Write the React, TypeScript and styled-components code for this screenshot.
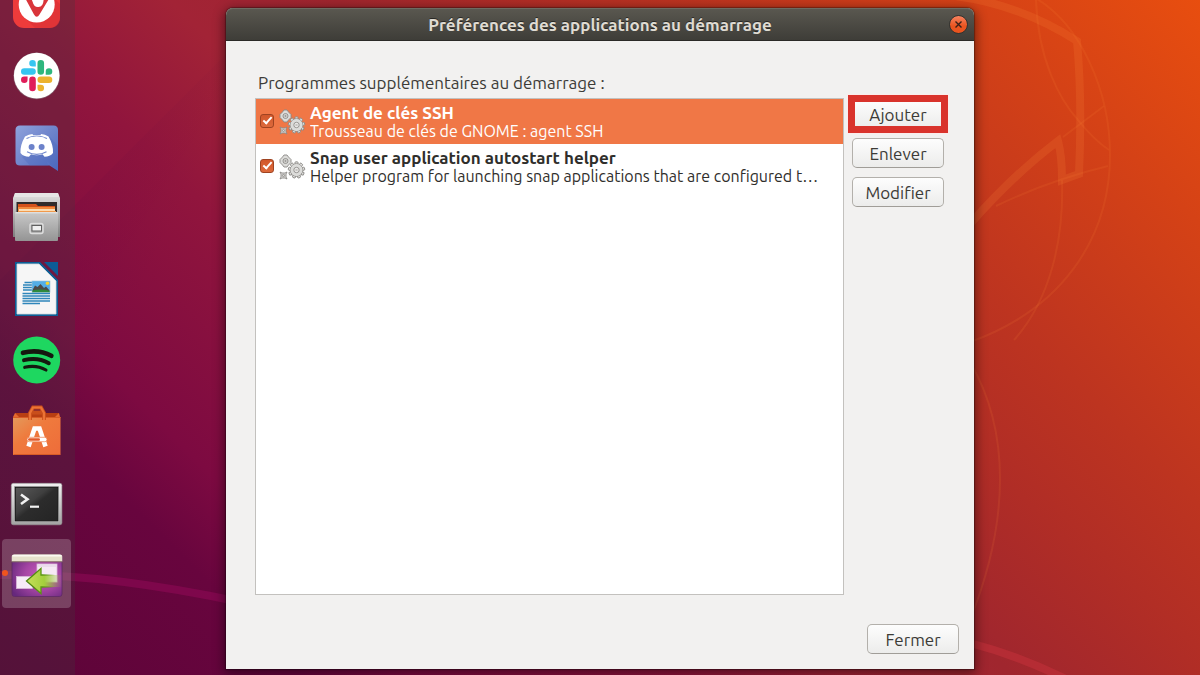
import React, { useState } from "react";
import styled, { createGlobalStyle, css } from "styled-components";

const GlobalStyle = createGlobalStyle`
  *, *::before, *::after { box-sizing: border-box; }
  body {
    margin: 0;
    font-family: Ubuntu, "Noto Sans", sans-serif;
    font-size: 17px;
    line-height: 19px;
    color: #3c3b37;
  }
`;

const Desktop = styled.div`
  position: relative;
  display: flex;
  min-height: 100vh;
  overflow: hidden;
  background: linear-gradient(
    45deg,
    #5c0438 0%,
    #68053e 16%,
    #7d0a41 22%,
    #91153d 36%,
    #a22336 45%,
    #a0262e 54%,
    #b02d26 64%,
    #bd3420 73%,
    #d54216 88%,
    #e84e0f 100%
  );
`;

const Wallpaper = styled.svg`
  position: absolute;
  inset: 0;
  width: 100%;
  height: 100%;
`;

const Dock = styled.nav`
  position: relative;
  flex: none;
  width: 75px;
  height: 100vh;
  background: rgba(64, 56, 60, 0.28);
`;

const DockList = styled.ul`
  display: flex;
  flex-direction: column;
  gap: 2px;
  margin: -29px 0 0;
  padding: 0 2px;
  list-style: none;
`;

const DockButton = styled.button<{ $running?: boolean }>`
  position: relative;
  display: block;
  width: 69px;
  height: 69px;
  padding: 0;
  border: 0;
  border-radius: 4px;
  background: ${(p) => (p.$running ? "rgba(255, 255, 255, 0.2)" : "none")};

  ${(p) =>
    p.$running &&
    css`
      &::before {
        content: "";
        position: absolute;
        left: 0;
        top: 31px;
        width: 6px;
        height: 6px;
        border-radius: 50%;
        background: #f0541e;
      }
    `}

  svg {
    display: block;
    width: 69px;
    height: 69px;
  }
`;

const Workspace = styled.main`
  position: relative;
  flex: 1;
  min-width: 0;
  display: flex;
  padding: 8px 226px 6px 151px;
`;

const Window = styled.section`
  flex: 1;
  min-width: 0;
  display: flex;
  flex-direction: column;
  border-radius: 7px 7px 0 0;
  background: #f2f1f0;
  box-shadow: 0 0 1px 1px rgba(0, 0, 0, 0.3), 0 3px 12px 2px rgba(0, 0, 0, 0.45);
`;

const TitleBar = styled.header`
  display: grid;
  grid-template-columns: 1fr auto 1fr;
  align-items: center;
  height: 33px;
  padding: 0 6px;
  border-radius: 7px 7px 0 0;
  border-bottom: 1px solid #2b2a27;
  background: linear-gradient(#5a5850, #3e3d38);
  box-shadow: inset 0 1px #6d6b62;
`;

const Title = styled.h1`
  grid-column: 2;
  margin: 0;
  font-size: 17px;
  font-weight: 700;
  line-height: 19px;
  color: #dfdbd2;
  text-shadow: 0 -1px rgba(0, 0, 0, 0.5);
`;

const CloseButton = styled.button`
  justify-self: end;
  display: grid;
  place-items: center;
  width: 19px;
  height: 19px;
  padding: 0;
  border: 1px solid #33322e;
  border-radius: 50%;
  background: linear-gradient(#f78360, #e9541f 60%);

  svg {
    width: 7px;
    height: 7px;
  }
`;

const Content = styled.div`
  flex: 1;
  display: flex;
  flex-direction: column;
  padding: 32px 15px 15px 29px;
`;

const Caption = styled.h2`
  margin: 0 0 6px;
  padding-left: 3px;
  font-size: 17px;
  font-weight: 400;
  line-height: 19px;
`;

const Panel = styled.div`
  flex: 1;
  display: flex;
  gap: 8px;
  padding-right: 15px;
`;

const ProgramList = styled.ul`
  flex: 1;
  min-width: 0;
  margin: 0;
  padding: 0;
  list-style: none;
  border: 1px solid #c3c1be;
  background: #fff;
`;

const ProgramRow = styled.li<{ $selected?: boolean }>`
  display: flex;
  align-items: center;
  height: 45px;
  padding: 0 8px 0 4px;
  color: ${(p) => (p.$selected ? "#fff" : "#2f2e2b")};
  background: ${(p) => (p.$selected ? "#f07746" : "none")};
`;

const Tick = styled.input`
  appearance: none;
  position: relative;
  flex: none;
  width: 14px;
  height: 14px;
  margin: 0 4px 2px 0;
  border: 1px solid #9f4321;
  border-radius: 3px;
  background: linear-gradient(#d2572a, #dd6a3c);

  &:checked::after {
    content: "";
    position: absolute;
    left: 4px;
    top: 0;
    width: 5px;
    height: 9px;
    border: solid #fff;
    border-width: 0 2px 2px 0;
    transform: rotate(42deg);
  }
`;

const ProgramLabel = styled.label`
  flex: 1;
  min-width: 0;
  display: flex;
  align-items: center;

  > svg {
    flex: none;
    width: 28px;
    height: 28px;
    margin-right: 4px;
  }
`;

const ProgramText = styled.span`
  flex: 1;
  min-width: 0;
`;

const ProgramName = styled.strong`
  display: block;
  font-weight: 700;
  line-height: 19px;
  white-space: nowrap;
`;

const ProgramComment = styled.span`
  display: block;
  font-size: 16px;
  line-height: 19px;
  white-space: nowrap;
  overflow: hidden;
`;

const Actions = styled.div`
  flex: none;
  display: flex;
  flex-direction: column;
  gap: 9px;
  width: 92px;
  padding-top: 1px;
`;

const PushButton = styled.button<{ $highlighted?: boolean }>`
  position: relative;
  width: 92px;
  height: 30px;
  padding: 0;
  border: 1px solid #b3b0ab;
  border-bottom-color: #a09d98;
  border-radius: 5px;
  background: linear-gradient(#fdfdfd, #ececeb);
  font: inherit;
  color: #3c3b37;

  ${(p) =>
    p.$highlighted &&
    css`
      &::after {
        content: "";
        position: absolute;
        inset: -5px;
        border: 7px solid #d9332c;
        box-shadow: 0 0 0 1px #fbeceb;
      }
    `}
`;

const Footer = styled.footer`
  display: flex;
  justify-content: flex-end;
  padding-top: 29px;
`;

const VivaldiIcon = () => (
  <svg viewBox="0 0 69 69" aria-hidden="true">
    <rect x="11" y="10" width="47" height="47" rx="11" fill="#ee3b3b" />
    <path d="M22 46 33 57H47Q58 57 58 46V33L51 26Z" fill="#d93036" opacity=".6" />
    <circle cx="34.7" cy="33.5" r="18" fill="#fff" />
    <path
      d="M22 25 32 43.500Q34.700 48 37.500 43.500L47.500 27Q49 21 45 20.500 42 21 41.700 27 41.700 36 36.500 36 32 36.500 30.500 30.500L27 22Q22 20 22 25Z"
      fill="#d9353a"
    />
  </svg>
);

const SlackIcon = () => (
  <svg viewBox="0 0 69 69" aria-hidden="true">
    <circle cx="34.7" cy="33.9" r="23.3" fill="#8a8088" opacity=".6" />
    <circle cx="34.7" cy="33.6" r="22.8" fill="#fff" />
    <g transform="translate(19 18) scale(1.304)">
      <path fill="#e01e5a" d="M5.042 15.165a2.528 2.528 0 0 1-2.520 2.523A2.528 2.528 0 0 1 0 15.165a2.527 2.527 0 0 1 2.522-2.520h2.520v2.520zM6.313 15.165a2.527 2.527 0 0 1 2.521-2.520 2.527 2.527 0 0 1 2.521 2.520v6.313A2.528 2.528 0 0 1 8.834 24a2.528 2.528 0 0 1-2.521-2.522v-6.313z" />
      <path fill="#36c5f0" d="M8.834 5.042a2.528 2.528 0 0 1-2.521-2.520A2.528 2.528 0 0 1 8.834 0a2.528 2.528 0 0 1 2.521 2.522v2.520H8.834zM8.834 6.313a2.528 2.528 0 0 1 2.521 2.521 2.528 2.528 0 0 1-2.521 2.521H2.522A2.528 2.528 0 0 1 0 8.834a2.528 2.528 0 0 1 2.522-2.521h6.312z" />
      <path fill="#2eb67d" d="M18.956 8.834a2.528 2.528 0 0 1 2.522-2.521A2.528 2.528 0 0 1 24 8.834a2.528 2.528 0 0 1-2.522 2.521h-2.522V8.834zM17.688 8.834a2.528 2.528 0 0 1-2.523 2.521 2.527 2.527 0 0 1-2.520-2.521V2.522A2.527 2.527 0 0 1 15.165 0a2.528 2.528 0 0 1 2.523 2.522v6.312z" />
      <path fill="#ecb22e" d="M15.165 18.956a2.528 2.528 0 0 1 2.523 2.522A2.528 2.528 0 0 1 15.165 24a2.527 2.527 0 0 1-2.520-2.522v-2.522h2.520zM15.165 17.688a2.527 2.527 0 0 1-2.520-2.523 2.526 2.526 0 0 1 2.520-2.520h6.313A2.527 2.527 0 0 1 24 15.165a2.528 2.528 0 0 1-2.522 2.523h-6.313z" />
    </g>
  </svg>
);

const DiscordIcon = () => (
  <svg viewBox="0 0 69 69" aria-hidden="true">
    <defs>
      <linearGradient id="discord" x1="0" y1="0" x2="1" y2="1">
        <stop offset="0" stopColor="#8fa3dc" />
        <stop offset=".5" stopColor="#6e84cb" />
        <stop offset="1" stopColor="#4a68c0" />
      </linearGradient>
    </defs>
    <path d="M18 12.500H51.500Q56 12.500 56 17V58L47.500 52.500H18Q13.500 52.500 13.500 48V17Q13.500 12.500 18 12.500Z" fill="url(#discord)" />
    <path d="M20 44 28 52.500H46L45 48.500 56 58V33L48 24Z" fill="#4d69bd" opacity=".35" />
    <path
      d="M23 23.500Q27 21 30.500 21L31 22.300Q34.700 21.700 38.500 22.300L39 21Q43 21 46.500 23.500 51.500 32 51 40 48 43.800 42.500 43.800L40.500 41.300Q34.700 43 29 41.300L27 43.800Q21.500 43.800 18.500 40 18 32 23 23.500Z"
      fill="#fff"
    />
    <path d="M24.500 25.500Q34.700 20.500 45 25.500M25 38.700Q34.700 44 44.500 38.700" stroke="#7288cd" strokeWidth="1.100" fill="none" />
    <path d="M27 24.800Q34.700 22.600 42.500 24.800L42 27H27Z" fill="#fff" />
    <circle cx="29.600" cy="34" r="3" fill="#6c82ca" />
    <circle cx="39.600" cy="34" r="3" fill="#6c82ca" />
  </svg>
);

const FilesIcon = () => (
  <svg viewBox="0 0 69 69" aria-hidden="true">
    <defs>
      <linearGradient id="drawer" x1="0" y1="0" x2="0" y2="1">
        <stop offset="0" stopColor="#c9c9c9" />
        <stop offset="1" stopColor="#949494" />
      </linearGradient>
      <linearGradient id="cabinet" x1="0" y1="0" x2="0" y2="1">
        <stop offset="0" stopColor="#e2e2e2" />
        <stop offset="1" stopColor="#7e7e7e" />
      </linearGradient>
    </defs>
    <path d="M13 9H56L58 14V53H11V14Z" fill="url(#cabinet)" />
    <path d="M13 9H56L57 13H12Z" fill="#e6e6e6" />
    <rect x="14.500" y="18" width="40.500" height="11" fill="#302b2b" />
    <path d="M16 20H34L36 22H53V29H16Z" fill="#d4521b" />
    <path d="M16 23H53V29H16Z" fill="#f08a3c" />
    <path d="M17 25H53V29H17Z" fill="#fbdcb4" />
    <path d="M16 27H54V29H16Z" fill="#f19a4c" />
    <rect x="13" y="28" width="43" height="29" rx="1" fill="url(#drawer)" />
    <path d="M13.500 28.800H55.500" stroke="#e9e9e9" />
    <rect x="28" y="39.500" width="13" height="10" rx="2" fill="#aaa" stroke="#dcdcdc" strokeWidth="1.500" />
    <rect x="30" y="41.500" width="9.500" height="5.500" fill="#efefef" stroke="#5f5f5f" strokeWidth="1" />
  </svg>
);

const WriterIcon = () => (
  <svg viewBox="0 0 69 69" aria-hidden="true">
    <path d="M13 7H38L56 25V61H13Z" fill="#0c5f96" />
    <path d="M15 9H37L54 26V59H15Z" fill="#f6f6f6" stroke="#d3dbe0" strokeWidth=".8" />
    <path d="M39 5.500 57.500 24" stroke="#6f1840" strokeWidth="2.200" />
    <path d="M42 7H56V21Z" fill="#0d5c96" />
    <path d="M22.500 27.500H30M21 30H30M21 32.500H30M21 35H30M20.500 38.500H48M20.500 41H48M20.500 43.500H48M20.500 46H48M20.500 48.500H38" stroke="#2f86bb" strokeWidth="1.300" />
    <rect x="30" y="26" width="18" height="11.500" fill="#53aee6" />
    <path d="M30 36 33 30.500 35.500 32 38.500 29 42 33 44 31.500 48 36Z" fill="#4b4b49" />
    <path d="M30 35.500Q40 33.500 48 36V37.500H30Z" fill="#2f8a3c" />
    <circle cx="45.500" cy="28.300" r="1.800" fill="#f6d32d" />
    <rect x="30" y="26" width="18" height="11.500" fill="none" stroke="#9cc3da" strokeWidth=".6" />
  </svg>
);

const SpotifyIcon = () => (
  <svg viewBox="0 0 69 69" aria-hidden="true">
    <circle cx="34.700" cy="34" r="23.500" fill="#1ed760" />
    <g fill="none" stroke="#15190f" strokeLinecap="round">
      <path d="M21 26.800Q36.500 22.800 49.300 29.800" strokeWidth="4.700" />
      <path d="M22 34.200Q35.500 30.700 46.800 37.200" strokeWidth="3.900" />
      <path d="M22.700 41.300Q34.500 38.500 44 44" strokeWidth="3.100" />
    </g>
  </svg>
);

const SoftwareIcon = () => (
  <svg viewBox="0 0 69 69" aria-hidden="true">
    <defs>
      <linearGradient id="bag" x1="0" y1="0" x2="1" y2="1">
        <stop offset="0" stopColor="#e39a5c" />
        <stop offset=".4" stopColor="#ef7a3d" />
        <stop offset="1" stopColor="#ee6c3a" />
      </linearGradient>
    </defs>
    <path d="M13 16H57V21H13Z" fill="#b83e12" />
    <path d="M13 16 17 20H11ZM57 16 53 20H58Z" fill="#e46a30" />
    <rect x="11" y="20" width="47.500" height="38" fill="url(#bag)" />
    <path d="M11.500 57.500H58M11 20.500H58.500" stroke="#d85c26" />
    <path d="M28 23V16L31 10.500H39L42 16V23M28 15.500H42" fill="none" stroke="#c94e1b" strokeWidth="3.800" />
    <path d="M28 23V16L31 10.500H39L42 16V23" fill="none" stroke="#ec7336" strokeWidth="2.200" />
    <path d="M26.500 49.500 32.500 31.500H37.500L43.500 49.500M29 42.500H41" fill="none" stroke="#fff" strokeWidth="4.600" />
    <rect x="25" y="40.300" width="20" height="4.400" rx="2.200" fill="#fff" stroke="#ee7e4b" strokeWidth=".7" />
    <rect x="26" y="41.200" width="12" height="2.600" rx="1.300" fill="#e2592a" />
  </svg>
);

const TerminalIcon = () => (
  <svg viewBox="0 0 69 69" aria-hidden="true">
    <defs>
      <linearGradient id="screen" x1="0" y1="0" x2="1" y2="1">
        <stop offset="0" stopColor="#5a5a5a" />
        <stop offset=".4" stopColor="#3f3f3f" />
        <stop offset=".5" stopColor="#2c2c2c" />
        <stop offset="1" stopColor="#242424" />
      </linearGradient>
      <linearGradient id="frame" x1="0" y1="0" x2="0" y2="1">
        <stop offset="0" stopColor="#f1f1f1" />
        <stop offset="1" stopColor="#a3a3a3" />
      </linearGradient>
    </defs>
    <rect x="9.300" y="15.300" width="50.600" height="41.500" rx="2" fill="url(#frame)" stroke="#999" strokeWidth=".6" />
    <rect x="12" y="18" width="45" height="36" fill="#b8b8b8" />
    <rect x="13.300" y="19.300" width="42.500" height="33.500" fill="url(#screen)" stroke="#151515" />
    <path d="M19 26.500 25.500 31.200 19 36" fill="none" stroke="#f2f2f2" strokeWidth="2.600" />
    <path d="M28 38.700H37" stroke="#f2f2f2" strokeWidth="2.200" />
  </svg>
);

const StartupIcon = () => (
  <svg viewBox="0 0 69 69" aria-hidden="true">
    <defs>
      <radialGradient id="desk" cx=".6" cy=".5" r=".7">
        <stop offset="0" stopColor="#c85cbc" />
        <stop offset=".5" stopColor="#a546a4" />
        <stop offset="1" stopColor="#66287c" />
      </radialGradient>
      <linearGradient id="arrow" x1="0" y1="0" x2="1" y2="0">
        <stop offset="0" stopColor="#c7df5a" />
        <stop offset=".5" stopColor="#a3cf3c" />
        <stop offset="1" stopColor="#8fc02e" stopOpacity="0" />
      </linearGradient>
      <linearGradient id="arrowEdge" x1="0" y1="0" x2="1" y2="0">
        <stop offset="0" stopColor="#4d8410" />
        <stop offset=".45" stopColor="#5c9614" />
        <stop offset=".8" stopColor="#5c9614" stopOpacity="0" />
      </linearGradient>
    </defs>
    <rect x="10" y="15.500" width="50" height="42" rx="2.500" fill="url(#desk)" stroke="#5e2a66" strokeWidth=".8" />
    <path d="M9.700 22.500V18Q9.700 15.200 12.500 15.200H57.500Q60.300 15.200 60.300 18V22.500Z" fill="#e6e2cc" />
    <path d="M10.500 16.800H59.500" stroke="#fbfaf2" strokeWidth="1.500" />
    <path d="M9.700 22.800H60.300" stroke="#7f7558" strokeWidth=".8" />
    <rect x="35" y="25" width="20" height="18" fill="#f6e9f5" stroke="#d9b9d9" strokeWidth=".8" />
    <path d="M36 27H54" stroke="#dfcfe0" strokeWidth="1" />
    <rect x="14.500" y="37.500" width="16" height="12" fill="#f6ecf7" stroke="#d9b9d9" strokeWidth=".8" />
    <path d="M24.500 42 39 29.500V36H60V48H39V54.500Z" fill="url(#arrow)" stroke="url(#arrowEdge)" strokeWidth="1.300" />
  </svg>
);

const teeth = (count: number) => Array.from({ length: count }, (_, i) => (360 / count) * i);

const GearsIcon = () => (
  <svg viewBox="0 0 28 28" aria-hidden="true">
    <g fill="#dcdcda" stroke="#8b8986" strokeWidth=".9">
      <g transform="translate(7.500 8)">
        <path d="M-1.500-6H1.500L3-4 5.500-1.500V1.500L3 4 1.500 6H-1.500L-3 4-5.500 1.500V-1.500L-3-4Z" />
        <circle r="2.500" />
        <circle r=".7" />
      </g>
      <g transform="translate(18.500 17)">
        {teeth(9).map((angle) => (
          <rect key={angle} x="-1.500" y="-8.200" width="3" height="4" rx=".8" transform={`rotate(${angle})`} />
        ))}
        <circle r="6.200" />
        <circle r="6" stroke="none" />
        <circle r="2.700" fill="#f3f2f1" />
        <circle r="1.300" fill="#c7c5c3" stroke="none" />
      </g>
      <g transform="translate(5.500 22.500)">
        <path d="M-3.500-3.500-1.500-2.500H1.500L3.500-3.500 2.500-1.500V1.500L3.500 3.500 1.500 2.500H-1.500L-3.500 3.500-2.500 1.500V-1.500Z" />
        <circle r="1.100" />
      </g>
    </g>
  </svg>
);

const dockItems = [
  { name: "Vivaldi", Icon: VivaldiIcon },
  { name: "Slack", Icon: SlackIcon },
  { name: "Discord", Icon: DiscordIcon },
  { name: "Fichiers", Icon: FilesIcon },
  { name: "LibreOffice Writer", Icon: WriterIcon },
  { name: "Spotify", Icon: SpotifyIcon },
  { name: "Logiciels Ubuntu", Icon: SoftwareIcon },
  { name: "Terminal", Icon: TerminalIcon },
  { name: "Applications au démarrage", Icon: StartupIcon, running: true },
];

const programs = [
  { id: "ssh", name: "Agent de clés SSH", comment: "Trousseau de clés de GNOME : agent SSH" },
  {
    id: "snap",
    name: "Snap user application autostart helper",
    comment: "Helper program for launching snap applications that are configured t…",
  },
];

export default function App() {
  const [selected, setSelected] = useState("ssh");

  return (
    <Desktop>
      <GlobalStyle />
      <Wallpaper viewBox="0 0 1200 675" preserveAspectRatio="xMidYMid slice" aria-hidden="true">
        <defs>
          <linearGradient id="facet" x1="0" y1="0" x2="1" y2="1">
            <stop offset=".2" stopColor="#5c0040" stopOpacity=".16" />
            <stop offset=".5" stopColor="#5c0040" stopOpacity="0" />
          </linearGradient>
        </defs>
        <path d="M-10 290 290-10V590H-10Z" fill="url(#facet)" />
        <g fill="none" stroke="#ff8c3c" strokeOpacity=".16">
          <path
            strokeWidth="8"
            d="M955-4C1000 2 1040 17 1077 41 1081 85 1081 130 1079 174L1062 180C1062 165 1061 152 1058 141 1030 162 1000 190 970 224"
          />
          <g strokeWidth="2" strokeOpacity=".12">
            <path d="M1037-1C1080 25 1110 90 1110 155 1110 240 1060 310 970 342" />
            <path d="M1036 0C1038 60 1060 100 1078 120 1090 135 1100 144 1109 150" />
            <path d="M1104 106 1063 137M1108 166Q1050 180 996 206" />
            <path d="M1062 180C1064 240 1050 300 1014 340" />
            <path d="M970 362C1010 430 1010 520 970 620" />
          </g>
        </g>
        <path d="M970 643Q1020 656 1070 681" fill="none" stroke="#c8323c" strokeOpacity=".5" strokeWidth="8" />
        <path d="M0 575C80 573 160 585 240 602" fill="none" stroke="#960a5a" strokeOpacity=".5" strokeWidth="8" />
      </Wallpaper>

      <Dock aria-label="Dock">
        <DockList>
          {dockItems.map(({ name, Icon, running }) => (
            <li key={name}>
              <DockButton type="button" aria-label={name} $running={running}>
                <Icon />
              </DockButton>
            </li>
          ))}
        </DockList>
      </Dock>

      <Workspace>
        <Window aria-labelledby="window-title">
          <TitleBar>
            <Title id="window-title">Préférences des applications au démarrage</Title>
            <CloseButton type="button" aria-label="Fermer la fenêtre">
              <svg viewBox="0 0 7 7" aria-hidden="true">
                <path d="M.5.500 6.500 6.500M6.500.500.500 6.500" stroke="#3a2018" strokeWidth="1.400" />
              </svg>
            </CloseButton>
          </TitleBar>

          <Content>
            <Caption>Programmes supplémentaires au démarrage :</Caption>
            <Panel>
              <ProgramList>
                {programs.map(({ id, name, comment }) => (
                  <ProgramRow key={id} $selected={id === selected} onClick={() => setSelected(id)}>
                    <Tick type="checkbox" id={id} defaultChecked />
                    <ProgramLabel htmlFor={id}>
                      <GearsIcon />
                      <ProgramText>
                        <ProgramName>{name}</ProgramName>
                        <ProgramComment>{comment}</ProgramComment>
                      </ProgramText>
                    </ProgramLabel>
                  </ProgramRow>
                ))}
              </ProgramList>
              <Actions>
                <PushButton type="button" $highlighted>
                  Ajouter
                </PushButton>
                <PushButton type="button">Enlever</PushButton>
                <PushButton type="button">Modifier</PushButton>
              </Actions>
            </Panel>
            <Footer>
              <PushButton type="button">Fermer</PushButton>
            </Footer>
          </Content>
        </Window>
      </Workspace>
    </Desktop>
  );
}
